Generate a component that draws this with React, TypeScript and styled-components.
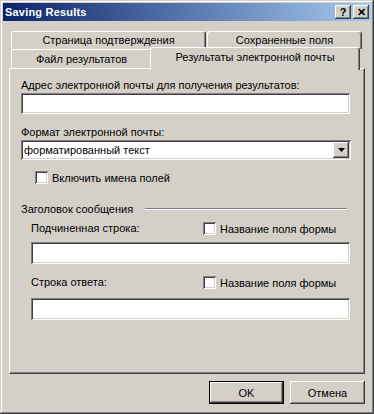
import styled, { createGlobalStyle, css } from 'styled-components';

const GlobalStyle = createGlobalStyle`
  body {
    margin: 0;
    background: #d4d0c8;
    font-family: 'Liberation Sans', Arial, sans-serif;
    font-size: 11px;
    color: #000;
  }
`;

const Window = styled.div`
  box-sizing: border-box;
  width: 374px;
  height: 414px;
  padding: 3px;
  background: #d4d0c8;
  display: flex;
  flex-direction: column;
  box-shadow: inset -1px -1px #404040, inset 1px 1px #d4d0c8,
    inset -2px -2px #808080, inset 2px 2px #ffffff;
`;

const TitleBar = styled.div`
  height: 18px;
  flex: none;
  display: flex;
  align-items: center;
  padding: 0 2px;
  background: linear-gradient(to right, #0a246a, #a6caf0);
`;

const Title = styled.div`
  flex: 1;
  color: #fff;
  font-weight: bold;
  font-size: 11px;
  letter-spacing: 0.2px;
`;

const RaisedButton = styled.div`
  box-sizing: border-box;
  background: #d4d0c8;
  display: flex;
  align-items: center;
  justify-content: center;
  box-shadow: inset -1px -1px #404040, inset 1px 1px #ffffff,
    inset -2px -2px #808080;
`;

const CaptionButton = styled(RaisedButton)<{ $gap?: boolean }>`
  width: 16px;
  height: 14px;
  margin-left: ${(p) => (p.$gap ? 2 : 0)}px;
  font-weight: bold;
  font-size: 11px;
  line-height: 1;
`;

const Body = styled.div`
  flex: 1;
  display: flex;
  flex-direction: column;
  padding: 10px 6px 0;
`;

const TabRow = styled.div<{ $front?: boolean }>`
  display: flex;
  align-items: flex-end;
  height: ${(p) => (p.$front ? 19 : 18)}px;
  padding-left: 2px;
  gap: ${(p) => (p.$front ? 0 : 1)}px;
`;

const Tab = styled.div<{ $w: number; $active?: boolean }>`
  box-sizing: border-box;
  width: ${(p) => p.$w}px;
  height: 100%;
  padding-bottom: 1px;
  display: flex;
  align-items: center;
  justify-content: center;
  background: #d4d0c8;
  border: 1px solid #fff;
  border-bottom: none;
  border-right-color: #404040;
  border-radius: 3px 3px 0 0;
  box-shadow: inset -1px 0 #808080;
  ${(p) =>
    p.$active &&
    css`
      position: relative;
      z-index: 1;
      height: 23px;
      margin: 0 -2px -2px;
      padding-bottom: 4px;
    `}
`;

const Panel = styled.div`
  box-sizing: border-box;
  height: 306px;
  padding: 10px 14px 0 11px;
  display: flex;
  flex-direction: column;
  border: 1px solid #fff;
  border-right-color: #404040;
  border-bottom-color: #404040;
  box-shadow: inset -1px -1px #808080;
`;

const Label = styled.div<{ $mt?: number }>`
  line-height: 13px;
  margin-top: ${(p) => p.$mt ?? 0}px;
  white-space: nowrap;
`;

const TextBox = styled.div<{ $mt?: number; $h?: number }>`
  box-sizing: border-box;
  height: ${(p) => p.$h ?? 21}px;
  margin-top: ${(p) => p.$mt ?? 1}px;
  background: #fff;
  box-shadow: inset 1px 1px #808080, inset -1px -1px #ffffff,
    inset 2px 2px #404040, inset -2px -2px #d4d0c8;
`;

const Select = styled(TextBox)`
  display: flex;
  align-items: center;
  padding: 2px;
  margin-right: -1px;
`;

const SelectValue = styled.div`
  flex: 1;
  padding-left: 1px;
`;

const DropButton = styled(RaisedButton)`
  width: 16px;
  height: 16px;
`;

const CheckRow = styled.div<{ $mt?: number; $indent?: number }>`
  display: flex;
  align-items: center;
  gap: 4px;
  height: 13px;
  margin-top: ${(p) => p.$mt ?? 0}px;
  margin-left: ${(p) => p.$indent ?? 0}px;
  white-space: nowrap;
`;

const CheckBox = styled.div`
  box-sizing: border-box;
  width: 13px;
  height: 13px;
  flex: none;
  background: #fff;
  box-shadow: inset 1px 1px #808080, inset -1px -1px #ffffff,
    inset 2px 2px #404040, inset -2px -2px #d4d0c8;
`;

const GroupHeader = styled.div`
  display: flex;
  align-items: center;
  margin-top: 18px;
  height: 13px;
`;

const EtchedLine = styled.div`
  flex: 1;
  height: 0;
  margin: 0 3px 0 12px;
  border-top: 1px solid #808080;
  border-bottom: 1px solid #ffffff;
`;

const Group = styled.div`
  display: flex;
  flex-direction: column;
  padding-left: 10px;
`;

const FieldHead = styled.div<{ $mt: number }>`
  display: grid;
  grid-template-columns: 172px auto;
  align-items: center;
  height: 13px;
  margin-top: ${(p) => p.$mt}px;
`;

const Footer = styled.div`
  display: flex;
  justify-content: flex-end;
  gap: 6px;
  padding-top: 7px;
`;

const DialogButton = styled(RaisedButton)<{ $default?: boolean }>`
  width: 75px;
  height: 23px;
  ${(p) =>
    p.$default &&
    css`
      box-shadow: inset 0 0 0 1px #000, inset -2px -2px #404040,
        inset 2px 2px #ffffff, inset -3px -3px #808080;
    `}
`;

function DropArrow() {
  return (
    <svg width="7" height="4" viewBox="0 0 7 4">
      <path d="M0 0h7L3.5 4z" fill="#000" />
    </svg>
  );
}

export default function App() {
  return (
    <>
      <GlobalStyle />
      <Window>
        <TitleBar>
          <Title>Saving Results</Title>
          <CaptionButton>?</CaptionButton>
          <CaptionButton $gap>✕</CaptionButton>
        </TitleBar>
        <Body>
          <TabRow>
            <Tab $w={195}>Страница подтверждения</Tab>
            <Tab $w={155}>Сохраненные поля</Tab>
          </TabRow>
          <TabRow $front>
            <Tab $w={141}>Файл результатов</Tab>
            <Tab $w={210} $active>
              Результаты электронной почты
            </Tab>
          </TabRow>
          <Panel>
            <Label>Адрес электронной почты для получения результатов:</Label>
            <TextBox />
            <Label $mt={12}>Формат электронной почты:</Label>
            <Select $h={20}>
              <SelectValue>форматированный текст</SelectValue>
              <DropButton>
                <DropArrow />
              </DropButton>
            </Select>
            <CheckRow $mt={11} $indent={14}>
              <CheckBox />
              Включить имена полей
            </CheckRow>
            <GroupHeader>
              Заголовок сообщения
              <EtchedLine />
            </GroupHeader>
            <Group>
              <FieldHead $mt={7}>
                <Label>Подчиненная строка:</Label>
                <CheckRow>
                  <CheckBox />
                  Название поля формы
                </CheckRow>
              </FieldHead>
              <TextBox $mt={7} $h={22} />
              <FieldHead $mt={12}>
                <Label>Строка ответа:</Label>
                <CheckRow>
                  <CheckBox />
                  Название поля формы
                </CheckRow>
              </FieldHead>
              <TextBox $mt={9} $h={22} />
            </Group>
          </Panel>
          <Footer>
            <DialogButton $default>OK</DialogButton>
            <DialogButton>Отмена</DialogButton>
          </Footer>
        </Body>
      </Window>
    </>
  );
}
